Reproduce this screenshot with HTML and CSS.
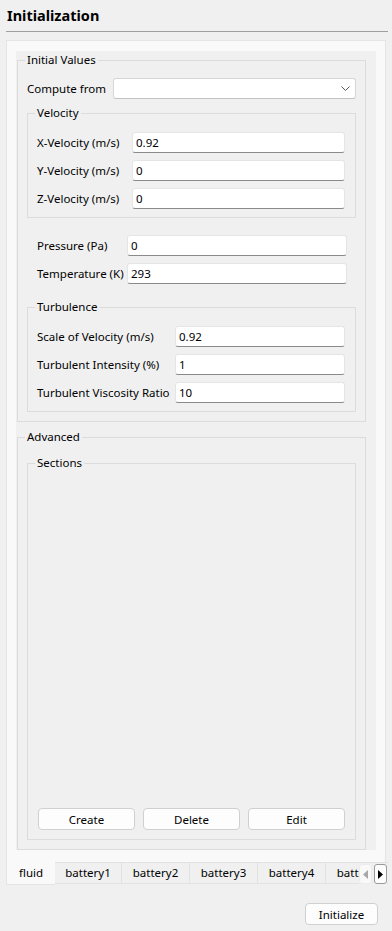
FILE: index.html
```html
<!DOCTYPE html>
<html lang="en">
    <head>
        <meta charset="UTF-8" />
        <meta name="viewport" content="width=device-width, initial-scale=1.0" />
        <title>Initialization</title>
        <link rel="stylesheet" href="styles.css">
    </head>
    <body>
        <h1 class="title">Initialization</h1>

        <div class="tab-widget">
            <div class="pane">
                <div class="scroll-area">
                    <fieldset class="group group-initial">
                        <legend>Initial Values</legend>

                        <div class="form form-compute">
                            <label for="compute">Compute from</label>
                            <div class="combo" id="compute" role="button">
                                <svg width="9" height="5" viewBox="0 0 9 5"><polyline points="0.5,0.5 4.5,4.5 8.5,0.5" fill="none" stroke="#555" stroke-width="1"/></svg>
                            </div>
                        </div>

                        <fieldset class="group group-sub group-velocity">
                            <legend>Velocity</legend>
                            <div class="form form-velocity">
                                <label for="vx">X-Velocity (m/s)</label>
                                <input type="text" id="vx" value="0.92" />
                                <label for="vy">Y-Velocity (m/s)</label>
                                <input type="text" id="vy" value="0" />
                                <label for="vz">Z-Velocity (m/s)</label>
                                <input type="text" id="vz" value="0" />
                            </div>
                        </fieldset>

                        <div class="form form-pressure">
                            <label for="pressure">Pressure (Pa)</label>
                            <input type="text" id="pressure" value="0" />
                            <label for="temperature">Temperature (K)</label>
                            <input type="text" id="temperature" value="293" />
                        </div>

                        <fieldset class="group group-sub group-turbulence">
                            <legend>Turbulence</legend>
                            <div class="form form-turbulence">
                                <label for="scale">Scale of Velocity (m/s)</label>
                                <input type="text" id="scale" value="0.92" />
                                <label for="intensity">Turbulent Intensity (%)</label>
                                <input type="text" id="intensity" value="1" />
                                <label for="ratio">Turbulent Viscosity Ratio</label>
                                <input type="text" id="ratio" value="10" />
                            </div>
                        </fieldset>
                    </fieldset>

                    <fieldset class="group group-advanced">
                        <legend>Advanced</legend>
                        <fieldset class="group group-sub group-sections">
                            <legend>Sections</legend>
                            <div class="section-list"></div>
                            <div class="section-buttons">
                                <button class="btn">Create</button>
                                <button class="btn">Delete</button>
                                <button class="btn">Edit</button>
                            </div>
                        </fieldset>
                    </fieldset>
                </div>
            </div>

            <div class="tab-bar">
                <div class="tab selected">fluid</div>
                <div class="tab tab-first">battery1</div>
                <div class="tab">battery2</div>
                <div class="tab">battery3</div>
                <div class="tab">battery4</div>
                <div class="tab">battery5</div>

                <div class="tab-scroll">
                    <div class="scroll-btn disabled">
                        <svg width="5" height="9" viewBox="0 0 5 9"><polygon points="5,0 0,4.5 5,9" fill="#a8a8a8"/></svg>
                    </div>
                    <div class="scroll-btn">
                        <svg width="5" height="9" viewBox="0 0 5 9"><polygon points="0,0 5,4.5 0,9" fill="#000"/></svg>
                    </div>
                </div>
            </div>
        </div>

        <div class="footer">
            <button class="btn btn-init">Initialize</button>
        </div>
    </body>
</html>
```

FILE: styles.css
```css
body {
    margin: 0;
    background-color: #f0f0f0;
    font-family: "Noto Sans", "Open Sans", sans-serif;
    font-size: 11.5px;
    color: #000;
}

.title {
    margin: 0 4px 0 6px;
    padding: 5px 1px 6px;
    font-size: 14.5px;
    line-height: 20px;
    font-weight: bold;
    border-bottom: 1px solid #a0a0a0;
}

.tab-widget {
    margin: 8px 0 0 6px;
    width: 380px;
}

.pane {
    background: #f9f9f9;
    border: 1px solid #e5e5e5;
    border-bottom: none;
    padding: 10px 9px 12px 9px;
}

.scroll-area {
    background: #f0f0f0;
    height: 799px;
    box-sizing: border-box;
    padding: 1px 10px 0 1px;
}

/* group boxes */
.group {
    margin: 0;
    padding: 10px 9px 9px;
    border: 1px solid #dcdcdc;
    min-width: 0;
}

.group legend {
    margin-left: -2px;
    padding: 0 2px;
    line-height: 16px;
}

.group-velocity,
.group-turbulence {
    padding: 11px 10px 8px 9px;
}

.group-velocity {
    margin-top: 6px;
}

.group-turbulence {
    margin-top: 15px;
}

.group-advanced {
    margin-top: 7px;
}

.group-sections {
    padding: 0 10px 9px;
}

.group-sections legend {
    margin-left: -3px;
}

/* form rows */
.form {
    display: grid;
    grid-template-columns: 95px minmax(0, 1fr);
    row-gap: 7px;
    align-items: center;
}

.form label {
    line-height: 16px;
    white-space: nowrap;
}

.form-compute {
    grid-template-columns: 86px minmax(0, 1fr);
}

.form-pressure {
    grid-template-columns: 90px minmax(0, 1fr);
    margin-top: 17px;
    padding: 0 9px 0 10px;
}

.form-turbulence {
    grid-template-columns: 138px minmax(0, 1fr);
}

input[type="text"] {
    width: 100%;
    min-width: 0;
    height: 21px;
    box-sizing: border-box;
    margin: 0;
    padding: 0 3px;
    font-family: inherit;
    font-size: 11.5px;
    color: #000;
    background: #fff;
    border: 1px solid #e5e5e5;
    border-bottom-color: #8a8a8a;
    border-radius: 3px;
    outline: none;
}

.combo {
    height: 21px;
    box-sizing: border-box;
    background: #fff;
    border: 1px solid #d6d6d6;
    border-bottom-color: #c2c2c2;
    border-radius: 3px;
    display: flex;
    align-items: center;
    justify-content: flex-end;
    padding-right: 5px;
}

/* sections list */
.section-list {
    height: 337px;
}

.section-buttons {
    display: flex;
    gap: 8px;
}

.section-buttons .btn {
    flex: 1;
}

.btn {
    height: 22px;
    margin: 0;
    padding: 0 6px;
    font-family: inherit;
    font-size: 11.5px;
    color: #000;
    background: #fdfdfd;
    border: 1px solid #d0d0d0;
    border-radius: 4px;
}

/* tabs at the bottom */
.tab-bar {
    position: relative;
    display: flex;
    align-items: flex-start;
    width: 382px;
    height: 24px;
    overflow: hidden;
}

.tab {
    flex: none;
    width: 68px;
    height: 22px;
    box-sizing: border-box;
    line-height: 20px;
    text-align: center;
    white-space: nowrap;
    background: #f0f0f0;
    border: 1px solid #e2e2e2;
    border-left: none;
}

.tab-first {
    width: 67px;
}

.tab.selected {
    width: 49px;
    height: 23px;
    line-height: 22px;
    background: #f9f9f9;
    border-top: none;
    border-left: 1px solid #e5e5e5;
    border-right: none;
    border-bottom: 1px solid #e5e5e5;
}

.tab-scroll {
    position: absolute;
    top: 2px;
    left: 353px;
    display: flex;
    gap: 2px;
    background: #f0f0f0;
}

.scroll-btn {
    width: 13px;
    height: 20px;
    box-sizing: border-box;
    display: flex;
    align-items: center;
    justify-content: center;
    background: #fdfdfd;
    border: 1px solid #9a9a9a;
    border-radius: 3px;
}

.scroll-btn.disabled {
    background: #f9f9f9;
    border-color: #ececec;
}

.footer {
    display: flex;
    justify-content: flex-end;
    margin-top: 17px;
    padding-right: 14px;
}

.btn-init {
    width: 73px;
}
```
